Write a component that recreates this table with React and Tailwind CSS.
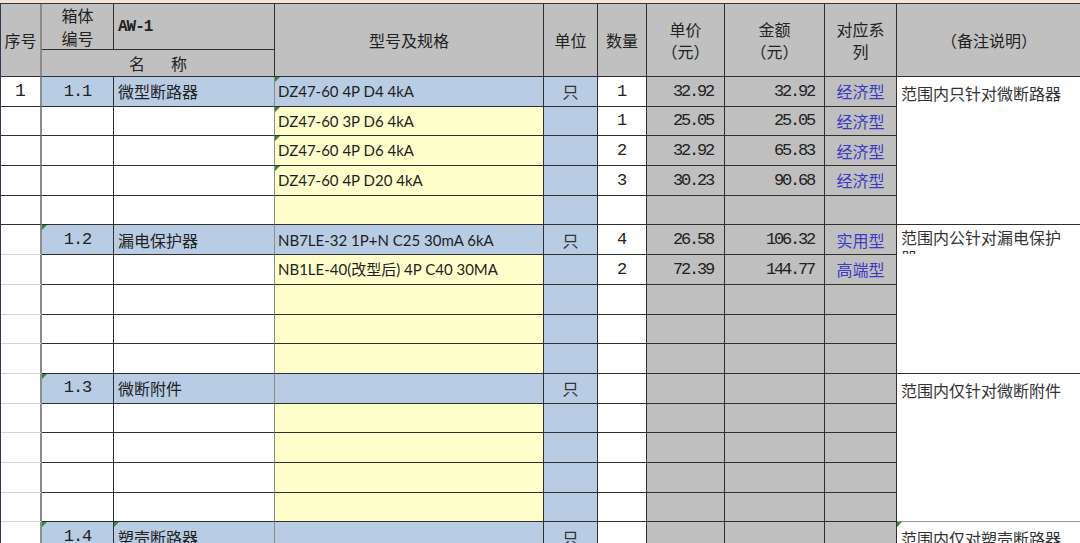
const CJK = '"Noto Sans CJK SC", sans-serif';
const NUM = '"Liberation Mono", "Noto Sans CJK SC", monospace';
const LAT = 'Lato, "Noto Sans CJK SC", sans-serif';

const sections = [
  {
    no: '1',
    code: '1.1',
    name: '微型断路器',
    remark: '范围内只针对微断路器',
    rows: [
      { model: 'DZ47-60 4P D4 4kA', qty: '1', price: '32.92', amount: '32.92', series: '经济型' },
      { model: 'DZ47-60 3P D6 4kA', qty: '1', price: '25.05', amount: '25.05', series: '经济型' },
      { model: 'DZ47-60 4P D6 4kA', qty: '2', price: '32.92', amount: '65.83', series: '经济型' },
      { model: 'DZ47-60 4P D20 4kA', qty: '3', price: '30.23', amount: '90.68', series: '经济型' },
      {},
    ],
  },
  {
    code: '1.2',
    name: '漏电保护器',
    remark: '范围内公针对漏电保护器',
    wrap: true,
    rows: [
      { model: 'NB7LE-32 1P+N C25 30mA 6kA', qty: '4', price: '26.58', amount: '106.32', series: '实用型' },
      { model: 'NB1LE-40(改型后) 4P C40 30MA', qty: '2', price: '72.39', amount: '144.77', series: '高端型' },
      {},
      {},
      {},
    ],
  },
  {
    code: '1.3',
    name: '微断附件',
    remark: '范围内仅针对微断附件',
    rows: [{}, {}, {}, {}, {}],
  },
  {
    code: '1.4',
    name: '塑壳断路器',
    remark: '范围内仅对塑壳断路器',
    rows: [{}, {}, {}],
  },
];

function Tri() {
  return (
    <span className="absolute top-0 left-0 w-0 h-0 border-t-[5px] border-r-[5px] border-t-[#2d8a3e] border-r-transparent" />
  );
}

const cell = 'relative border-r border-b border-[#2f2f2f] flex items-center overflow-hidden';

function Section({ s, si }) {
  const first = si === 0;
  return s.rows.map((r, i) => {
    const head = i === 0;
    return [
      <div
        key={`no${i}`}
        className={`relative border-r-2 border-r-[#8c8c8c] border-b flex items-center justify-center bg-white ${
          first ? 'border-b-[#2f2f2f]' : 'border-b-[#d4d4d4]'
        }`}
      >
        {head && s.no && (
          <span className="text-[18px] text-[#222]" style={{ fontFamily: NUM }}>
            {s.no}
          </span>
        )}
      </div>,
      <div key={`c${i}`} className={`${cell} justify-center ${head ? 'bg-[#b8cce4]' : 'bg-white'}`}>
        {head && !first && <Tri />}
        {head && (
          <span className="text-[17px] text-[#222] tracking-[-1px]" style={{ fontFamily: NUM }}>
            {s.code}
          </span>
        )}
      </div>,
      <div key={`n${i}`} className={`${cell} pl-1 ${head ? 'bg-[#b8cce4]' : 'bg-white'}`}>
        {head && si === 3 && <Tri />}
        {head && (
          <span className="text-[16px] text-[#222]" style={{ fontFamily: CJK }}>
            {s.name}
          </span>
        )}
      </div>,
      <div
        key={`m${i}`}
        className={`${cell} pl-[3px] border-l border-l-[#8c8c8c] -ml-px ${head ? 'bg-[#b8cce4]' : 'bg-[#ffffcc]'}`}
      >
        {first && i < 4 && <Tri />}
        <span className="text-[15px] text-[#1e1e1e] whitespace-nowrap" style={{ fontFamily: LAT }}>
          {r.model}
        </span>
      </div>,
      <div key={`u${i}`} className={`${cell} justify-center bg-[#b8cce4]`}>
        {head && (
          <span className="text-[16px] text-[#333]" style={{ fontFamily: CJK }}>
            只
          </span>
        )}
      </div>,
      <div key={`q${i}`} className={`${cell} justify-center bg-white`}>
        <span className="text-[17px] text-[#222]" style={{ fontFamily: NUM }}>
          {r.qty}
        </span>
      </div>,
      <div key={`p${i}`} className={`${cell} justify-end pr-[11px] bg-[#bfbfbf]`}>
        <span className="text-[17px] text-[#222] tracking-[-2.2px]" style={{ fontFamily: NUM }}>
          {r.price}
        </span>
      </div>,
      <div key={`a${i}`} className={`${cell} justify-end pr-[10px] bg-[#bfbfbf]`}>
        <span className="text-[17px] text-[#222] tracking-[-2.2px]" style={{ fontFamily: NUM }}>
          {r.amount}
        </span>
      </div>,
      <div key={`s${i}`} className={`${cell} justify-center bg-[#bfbfbf]`}>
        <span className="text-[16px] text-[#3b3bc4]" style={{ fontFamily: CJK }}>
          {r.series}
        </span>
      </div>,
      head && (
        <div
          key="r"
          className={`relative row-span-5 border-b bg-white ${si >= 2 ? 'border-b-[#9a9a9a]' : 'border-b-[#2f2f2f]'}`}
        >
          {si === 3 && <Tri />}
          <div className={`h-[29px] overflow-hidden pl-1 ${s.wrap ? 'pt-[2px]' : 'pt-[6px]'}`}>
            <p className="w-[172px] text-[16px] leading-[20px] text-[#333]" style={{ fontFamily: CJK }}>
              {s.remark}
            </p>
          </div>
        </div>
      ),
    ];
  });
}

export default function App() {
  return (
    <div className="w-[1080px] h-[543px] overflow-hidden bg-white">
      <div className="h-[3px] bg-[#f4e4d4]" />
      <div
        className="grid grid-cols-[41px_72px_161px_269px_54px_49px_78px_100px_72px_184px] grid-rows-[46px_27px_repeat(19,29.7px)] border-t border-l border-[#2f3a55]"
        style={{ fontFamily: CJK }}
      >
        {/* header */}
        <div className="row-span-2 border-r-2 border-r-[#8c8c8c] border-b border-b-[#2f2f2f] bg-[#c0c0c0] flex items-center justify-center text-[16px] text-[#222]">
          序号
        </div>
        <div className={`${cell} justify-center bg-[#c0c0c0] text-[16px] leading-[23px] text-[#222] text-center`}>
          箱体
          <br />
          编号
        </div>
        <div className={`${cell} pl-1 bg-[#c0c0c0]`}>
          <span className="text-[16px] font-bold text-[#222] tracking-[-1px]" style={{ fontFamily: NUM }}>
            AW-1
          </span>
        </div>
        <div className={`${cell} row-span-2 justify-center bg-[#c0c0c0] text-[16px] text-[#222]`}>型号及规格</div>
        <div className={`${cell} row-span-2 justify-center bg-[#c0c0c0] text-[16px] text-[#222]`}>单位</div>
        <div className={`${cell} row-span-2 justify-center bg-[#c0c0c0] text-[16px] text-[#222]`}>数量</div>
        <div className={`${cell} row-span-2 justify-center bg-[#c0c0c0] text-[16px] leading-[22px] text-[#222] text-center`}>
          单价
          <br />
          （元）
        </div>
        <div className={`${cell} row-span-2 justify-center bg-[#c0c0c0] text-[16px] leading-[22px] text-[#222] text-center`}>
          金额
          <br />
          （元）
        </div>
        <div className={`${cell} row-span-2 justify-center bg-[#c0c0c0] text-[16px] leading-[22px] text-[#222] text-center`}>
          对应系
          <br />
          列
        </div>
        <div className="row-span-2 border-b border-[#2f2f2f] bg-[#c0c0c0] flex items-center justify-center text-[16px] text-[#222]">
          （备注说明）
        </div>
        <div className={`${cell} col-span-2 justify-center gap-[26px] bg-[#c0c0c0] text-[16px] text-[#222]`}>
          <span>名</span>
          <span>称</span>
        </div>

        {sections.map((s, si) => (
          <Section key={s.code} s={s} si={si} />
        ))}
      </div>
    </div>
  );
}
